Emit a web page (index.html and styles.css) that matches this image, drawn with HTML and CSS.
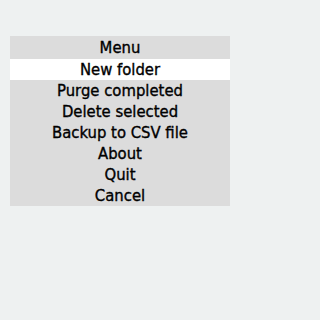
FILE: index.html
```html
<!DOCTYPE html>
<html>
<head>
<meta charset="utf-8">
<link rel="stylesheet" href="styles.css">
</head>
<body>
<div class="menu">
  <div class="title">Menu</div>
  <div class="item selected">New folder</div>
  <div class="item">Purge completed</div>
  <div class="item">Delete selected</div>
  <div class="item">Backup to CSV file</div>
  <div class="item">About</div>
  <div class="item">Quit</div>
  <div class="item">Cancel</div>
</div>
</body>
</html>
```
FILE: styles.css
```css
html, body {
  margin: 0;
  padding: 0;
  background: #eef1f1;
}
body {
  width: 240px;
  height: 320px;
  padding-top: 36px;
  box-sizing: border-box;
  font-family: "DejaVu Sans Condensed", "DejaVu Sans", sans-serif;
  font-size: 16.5px;
  color: #000;
  -webkit-text-stroke: 0.35px #000;
}
.menu {
  margin-left: 10px;
  width: 220px;
  background: #dcdcdc;
  display: flex;
  flex-direction: column;
}
.title {
  height: 23px;
  line-height: 24px;
  text-align: center;
}
.item {
  height: 21px;
  line-height: 21px;
  text-align: center;
}
.selected {
  background: #ffffff;
}
```
